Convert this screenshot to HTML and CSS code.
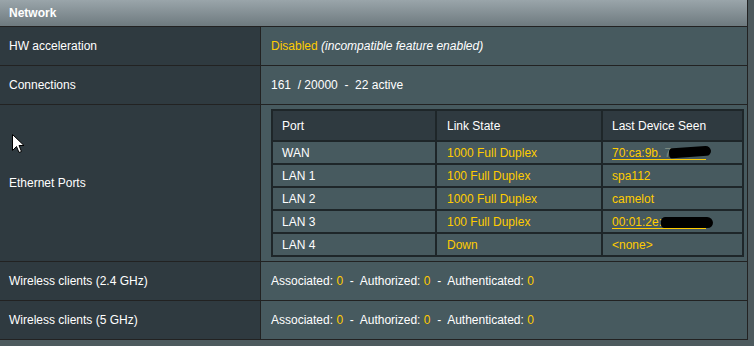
FILE: index.html
```html
<!DOCTYPE html>
<html>
<head>
<meta charset="utf-8">
<link rel="stylesheet" href="styles.css">
</head>
<body>
<table class="form">
  <colgroup><col class="col-label"><col class="col-value"></colgroup>
  <thead>
    <tr><th class="title" colspan="2">Network</th></tr>
  </thead>
  <tbody>
    <tr>
      <th>HW acceleration</th>
      <td><span class="yel">Disabled</span> <i>(incompatible feature enabled)</i></td>
    </tr>
    <tr>
      <th>Connections</th>
      <td>161&nbsp; / 20000&nbsp; -&nbsp; 22 active</td>
    </tr>
    <tr>
      <th>Ethernet Ports</th>
      <td class="ports-cell">
        <table class="ports">
          <thead>
            <tr><th class="c1">Port</th><th class="c2">Link State</th><th class="c3">Last Device Seen</th></tr>
          </thead>
          <tbody>
            <tr><td>WAN</td><td class="yel">1000 Full Duplex</td><td class="yel"><a class="mac">70:ca:9b.<span class="ghost">7 8</span><span class="blot b1"></span></a></td></tr>
            <tr><td>LAN 1</td><td class="yel">100 Full Duplex</td><td class="yel">spa112</td></tr>
            <tr><td>LAN 2</td><td class="yel">1000 Full Duplex</td><td class="yel">camelot</td></tr>
            <tr><td>LAN 3</td><td class="yel">100 Full Duplex</td><td class="yel"><a class="mac">00:01:2e:<span class="blot b2"></span></a></td></tr>
            <tr><td>LAN 4</td><td class="yel">Down</td><td class="yel">&lt;none&gt;</td></tr>
          </tbody>
        </table>
      </td>
    </tr>
    <tr>
      <th>Wireless clients (2.4 GHz)</th>
      <td>Associated: <span class="yel">0</span>&nbsp; -&nbsp; Authorized: <span class="yel">0</span>&nbsp; -&nbsp; Authenticated: <span class="yel">0</span></td>
    </tr>
    <tr>
      <th>Wireless clients (5 GHz)</th>
      <td>Associated: <span class="yel">0</span>&nbsp; -&nbsp; Authorized: <span class="yel">0</span>&nbsp; -&nbsp; Authenticated: <span class="yel">0</span></td>
    </tr>
  </tbody>
</table>
<svg class="cursor" width="13" height="20" viewBox="0 0 13 20">
  <path d="M0.5 0.5 L0.5 16.5 L4.5 12.5 L7 18.5 L9.5 17.5 L7 11.5 L12 11.5 Z" fill="#fff" stroke="#000" stroke-width="1"/>
</svg>
</body>
</html>
```
FILE: styles.css
```css
html, body {
  margin: 0;
  padding: 0;
}
body {
  background: #4d5a5e;
  width: 754px;
  height: 346px;
  overflow: hidden;
  position: relative;
  font-family: "Liberation Sans", Arial, sans-serif;
  font-size: 12px;
  color: #fff;
}
.form {
  width: 748px;
  table-layout: fixed;
  border-collapse: separate;
  border-spacing: 0;
  border-right: 1px solid #222;
}
.col-label { width: 261px; }
.col-value { width: 486px; }
.form > thead > tr > th.title {
  height: 27px;
  padding: 0 0 0 9px;
  box-sizing: border-box;
  text-align: left;
  font-weight: bold;
  background: linear-gradient(to bottom, #9aa5aa 0%, #6e7a7f 100%);
  border-bottom: 1px solid #222;
}
.form > tbody > tr > th {
  box-sizing: border-box;
  height: 39px;
  padding: 0 0 0 9px;
  text-align: left;
  font-weight: normal;
  background: #2f3a40;
  border-right: 1px solid #222;
  border-bottom: 1px solid #222;
  vertical-align: middle;
}
.form > tbody > tr > td {
  background: #475a5f;
  padding: 0 0 0 10px;
  border-bottom: 1px solid #222;
  vertical-align: middle;
}
.form > tbody > tr > td.ports-cell {
  padding: 4px 3px 4px 10px;
}
.yel {
  color: #ffcc00;
}
i {
  font-style: italic;
}
.ports {
  width: 473px;
  border-collapse: separate;
  border-spacing: 0;
  border-top: 2px solid #1e2629;
  border-left: 2px solid #1e2629;
  table-layout: fixed;
}
.ports th, .ports td {
  border-right: 2px solid #1e2629;
  border-bottom: 2px solid #1e2629;
  text-align: left;
  padding: 0 0 0 9px;
  vertical-align: middle;
  overflow: hidden;
}
.ports th {
  background: #2f3a40;
  font-weight: normal;
  height: 29px;
}
.ports td {
  background: #475a5f;
  height: 21px;
}
.ports .c1 { width: 153px; }
.ports .c2 { width: 154px; }
.ports .c3 { width: 130px; }
.ports th.c2 { padding-left: 10px; }
.ports td:nth-child(2) { padding-left: 10px; }
.mac {
  display: inline-block;
  position: relative;
  width: 94px;
  line-height: 12px;
  border-bottom: 1px solid #ffcc00;
  color: #ffcc00;
  white-space: nowrap;
}
.ghost {
  color: #7d8a80;
  margin-left: 3px;
}
.blot {
  position: absolute;
  background: #000;
  border-radius: 6px 8px 7px 5px;
  height: 10px;
}
.b1 {
  left: 57px;
  top: 0px;
  width: 42px;
  transform: rotate(-4deg);
}
.b2 {
  left: 49px;
  top: 1px;
  width: 52px;
  height: 11px;
}
.cursor {
  position: absolute;
  left: 12px;
  top: 134px;
}
```
